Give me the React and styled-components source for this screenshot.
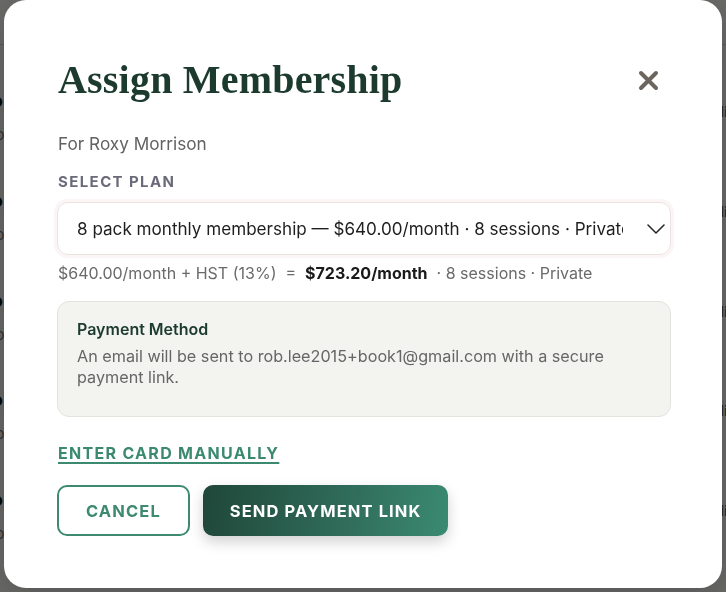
import React from "react";
import styled, { createGlobalStyle } from "styled-components";

const Global = createGlobalStyle`
  html, body { margin: 0; padding: 0; }
  body {
    background: #ffffff;
    font-family: Inter, "Noto Sans", sans-serif;
    width: 726px;
    height: 592px;
    overflow: hidden;
  }
  * { box-sizing: border-box; }
`;

const Page = styled.div`
  width: 726px;
  height: 592px;
  overflow: hidden;
  background: #fafaf8;
  display: flex;
  flex-direction: column;
  padding-top: 44px;
`;

const TopRule = styled.div`
  height: 1px;
  background: #d8d8d8;
  margin-bottom: 48px;
`;

const BgRow = styled.div`
  display: flex;
  justify-content: space-between;
  height: 108px;
  margin-left: -10px;
`;

const BgText = styled.div`
  display: flex;
  flex-direction: column;
  gap: 8px;
`;

const BgTitle = styled.span`
  font-weight: 700;
  font-size: 20px;
  color: #111;
`;

const BgSub = styled.span`
  font-size: 15px;
  color: #777;
`;

const BgRight = styled.span`
  font-size: 14px;
  color: #555;
  margin-right: -6px;
  margin-top: 10px;
`;

const Overlay = styled.div`
  position: fixed;
  inset: 0;
  background: rgba(0, 0, 0, 0.58);
  display: flex;
  justify-content: center;
  align-items: flex-start;
  padding: 0 4px;
`;

const Modal = styled.div`
  width: 718px;
  height: 588px;
  background: #ffffff;
  border-radius: 22px;
  padding: 53px 51px 0 53px;
  display: flex;
  flex-direction: column;
  box-shadow: 0 10px 40px rgba(0, 0, 0, 0.2);
`;

const Header = styled.div`
  display: flex;
  align-items: center;
  justify-content: space-between;
  height: 54px;
`;

const Title = styled.h1`
  margin: 0 0 0 1px;
  font-family: "Liberation Serif", "Times New Roman", serif;
  font-weight: 700;
  font-size: 40px;
  line-height: 54px;
  color: #1d3a2e;
  letter-spacing: 0.2px;
`;

const CloseButton = styled.button`
  border: none;
  background: none;
  padding: 0;
  width: 24px;
  height: 24px;
  display: flex;
  align-items: center;
  justify-content: center;
  margin-right: 11px;
  cursor: pointer;
`;

const Subtitle = styled.p`
  margin: 27px 0 0 1px;
  font-size: 17.2px;
  line-height: 20px;
  color: #626262;
`;

const Label = styled.div`
  margin: 18px 0 0 1px;
  font-size: 15px;
  line-height: 20px;
  font-weight: 700;
  letter-spacing: 1.4px;
  color: #6a6a7a;
`;

const SelectBox = styled.div`
  margin-top: 10px;
  height: 53px;
  border: 1px solid #ebe2e2;
  border-radius: 11px;
  box-shadow: 0 0 0 3px rgba(240, 215, 215, 0.25);
  display: flex;
  align-items: center;
  padding: 0 2px 0 19px;
  gap: 21px;
`;

const SelectText = styled.span`
  flex: 1;
  white-space: nowrap;
  overflow: hidden;
  font-size: 17.1px;
  color: #1e1e1e;
`;

const Summary = styled.div`
  margin: 8px 0 0 1px;
  font-size: 16px;
  line-height: 20px;
  color: #6a6a6a;
  white-space: pre;
`;

const Strong = styled.strong`
  color: #1a1a1a;
  font-weight: 700;
`;

const InfoBox = styled.div`
  margin-top: 18px;
  height: 116px;
  border: 1px solid #e4e4de;
  border-radius: 12px;
  background: #f3f3f0;
  padding: 17px 19px;
`;

const InfoTitle = styled.div`
  font-size: 16px;
  line-height: 20px;
  font-weight: 600;
  color: #1d3a2e;
`;

const InfoText = styled.p`
  margin: 7px 0 0;
  font-size: 16.2px;
  line-height: 21px;
  color: #666;
  max-width: 560px;
`;

const LinkButton = styled.a`
  margin: 26px 0 0 1px;
  align-self: flex-start;
  font-size: 16px;
  line-height: 20px;
  font-weight: 700;
  letter-spacing: 1.3px;
  color: #3b8a6f;
  text-decoration: underline;
  text-underline-offset: 3px;
  text-decoration-thickness: 1.5px;
  cursor: pointer;
`;

const Actions = styled.div`
  margin-top: 22px;
  display: flex;
  gap: 13px;
`;

const Button = styled.button`
  height: 51px;
  border-radius: 10px;
  font-family: Inter, "Noto Sans", sans-serif;
  font-size: 16.5px;
  font-weight: 700;
  letter-spacing: 1.1px;
  cursor: pointer;
  padding: 0 27px;
  ${(p) =>
    p.$primary
      ? `
    border: none;
    color: #ffffff;
    background: linear-gradient(100deg, #1f4739 0%, #2f6a58 55%, #3b8a72 100%);
    box-shadow: 0 6px 14px rgba(0, 0, 0, 0.18);
  `
      : `
    border: 2px solid #3e8a71;
    color: #3e8a71;
    background: #ffffff;
  `}
`;

const rows = [0, 1, 2, 3, 4];

export default function App() {
  return (
    <>
      <Global />
      <Page>
        <TopRule />
        {rows.map((r) => (
          <BgRow key={r}>
            <BgText>
              <BgTitle>Private Training</BgTitle>
              <BgSub>rob.lee2015@gmail.com</BgSub>
            </BgText>
            <BgRight>Edit</BgRight>
          </BgRow>
        ))}
      </Page>
      <Overlay>
        <Modal>
          <Header>
            <Title>Assign Membership</Title>
            <CloseButton aria-label="Close">
              <svg width="21" height="21" viewBox="0 0 21 21">
                <path
                  d="M3 3 L18 18 M18 3 L3 18"
                  stroke="#6b655d"
                  strokeWidth="4"
                  strokeLinecap="round"
                />
              </svg>
            </CloseButton>
          </Header>
          <Subtitle>For Roxy Morrison</Subtitle>
          <Label>SELECT PLAN</Label>
          <SelectBox>
            <SelectText>
              8 pack monthly membership — $640.00/month · 8 sessions · Private
            </SelectText>
            <svg width="24" height="24" viewBox="0 0 24 24" fill="none">
              <path
                d="M4 8 L12 16 L20 8"
                stroke="#2a2a2a"
                strokeWidth="1.6"
                strokeLinecap="round"
                strokeLinejoin="round"
              />
            </svg>
          </SelectBox>
          <Summary>
            $640.00/month + HST (13%)  =  <Strong>$723.20/month</Strong>  · 8 sessions · Private
          </Summary>
          <InfoBox>
            <InfoTitle>Payment Method</InfoTitle>
            <InfoText>
              An email will be sent to rob.lee2015+book1@gmail.com with a secure
              payment link.
            </InfoText>
          </InfoBox>
          <LinkButton>ENTER CARD MANUALLY</LinkButton>
          <Actions>
            <Button>CANCEL</Button>
            <Button $primary>SEND PAYMENT LINK</Button>
          </Actions>
        </Modal>
      </Overlay>
    </>
  );
}
